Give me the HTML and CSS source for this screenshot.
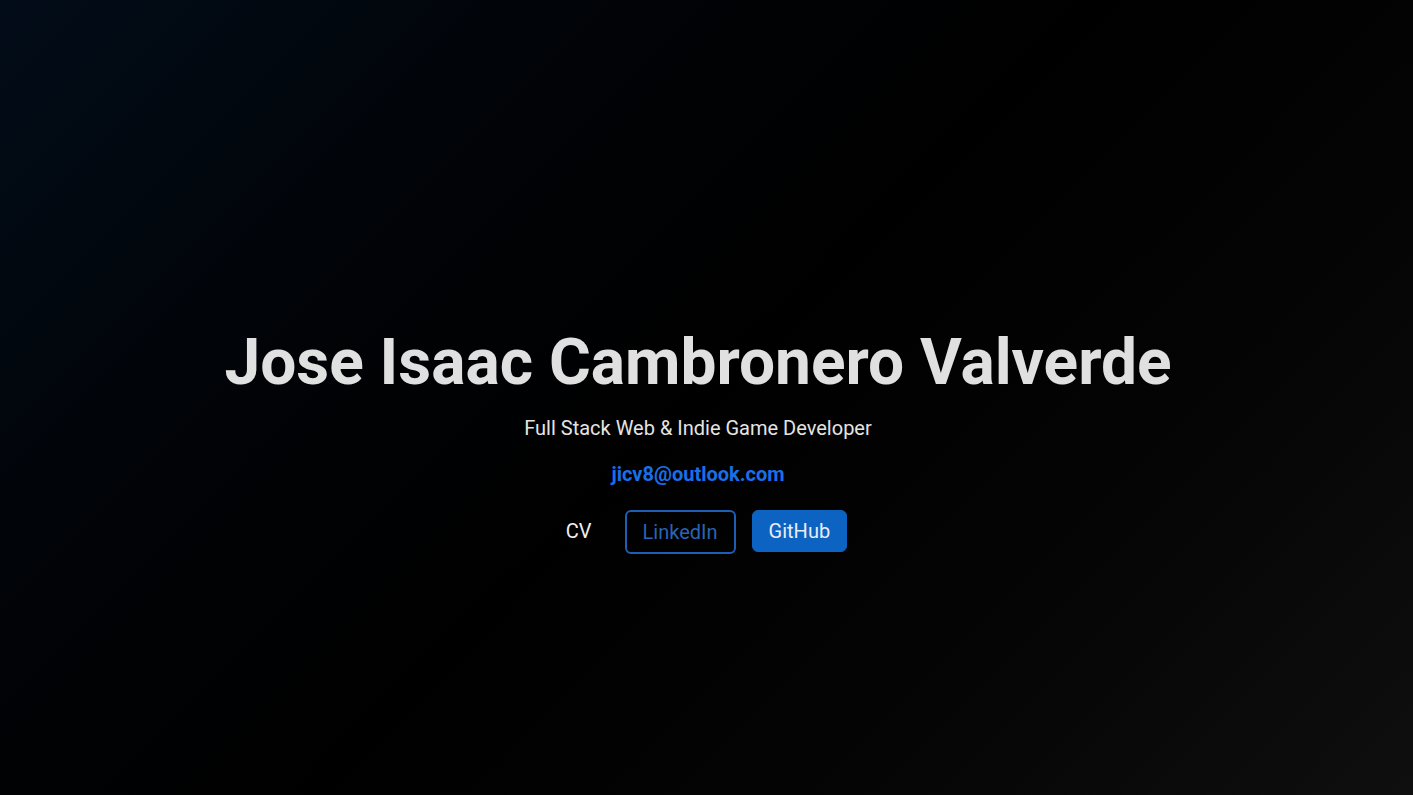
FILE: index.html
```html
<!DOCTYPE html>
<html lang="en">
<head>
<meta charset="utf-8">
<title>Jose Isaac Cambronero Valverde</title>
<link rel="stylesheet" href="styles.css">
</head>
<body>
<main class="hero">
  <h1 class="name">Jose Isaac Cambronero Valverde</h1>
  <p class="role">Full Stack Web &amp; Indie Game Developer</p>
  <a class="email" href="mailto:jicv8@outlook.com">jicv8@outlook.com</a>
  <nav class="links">
    <a class="btn btn-plain" href="#">CV</a>
    <a class="btn btn-outline" href="#">LinkedIn</a>
    <a class="btn btn-solid" href="#">GitHub</a>
  </nav>
</main>
</body>
</html>
```
FILE: styles.css
```css
html, body {
  margin: 0;
  height: 100%;
}
body {
  background: linear-gradient(135deg, #020c18 0%, #010306 30%, #000000 50%, #050505 75%, #0f0f0f 100%);
  font-family: Roboto, "Liberation Sans", sans-serif;
  color: #dedede;
}
.hero {
  box-sizing: border-box;
  height: 100%;
  padding: 84px 17px 0 0;
  display: flex;
  flex-direction: column;
  align-items: center;
  justify-content: center;
  text-align: center;
}
.name {
  margin: 0;
  font-size: 64px;
  font-weight: 700;
  line-height: 1.2;
  color: #e0e0e0;
}
.role {
  margin: 14px 0 0;
  font-size: 20px;
  line-height: 1.2;
  color: #e4e4e4;
}
.email {
  margin-top: 22px;
  font-size: 20px;
  font-weight: 700;
  line-height: 1.2;
  color: #1a6fe8;
  text-decoration: none;
}
.links {
  margin-top: 24px;
  display: flex;
  align-items: flex-start;
  gap: 16px;
}
.btn {
  font-size: 20px;
  line-height: 24px;
  padding: 8px 16px;
  border: 1px solid transparent;
  border-radius: 6px;
  text-decoration: none;
}
.btn-plain {
  color: #f0f0f0;
}
.btn-outline {
  border: 2px solid #1c5fb5;
  color: #2a64b4;
}
.btn-solid {
  background: #0d63c2;
  border-color: #0d63c2;
  color: #e6edf5;
}
```
